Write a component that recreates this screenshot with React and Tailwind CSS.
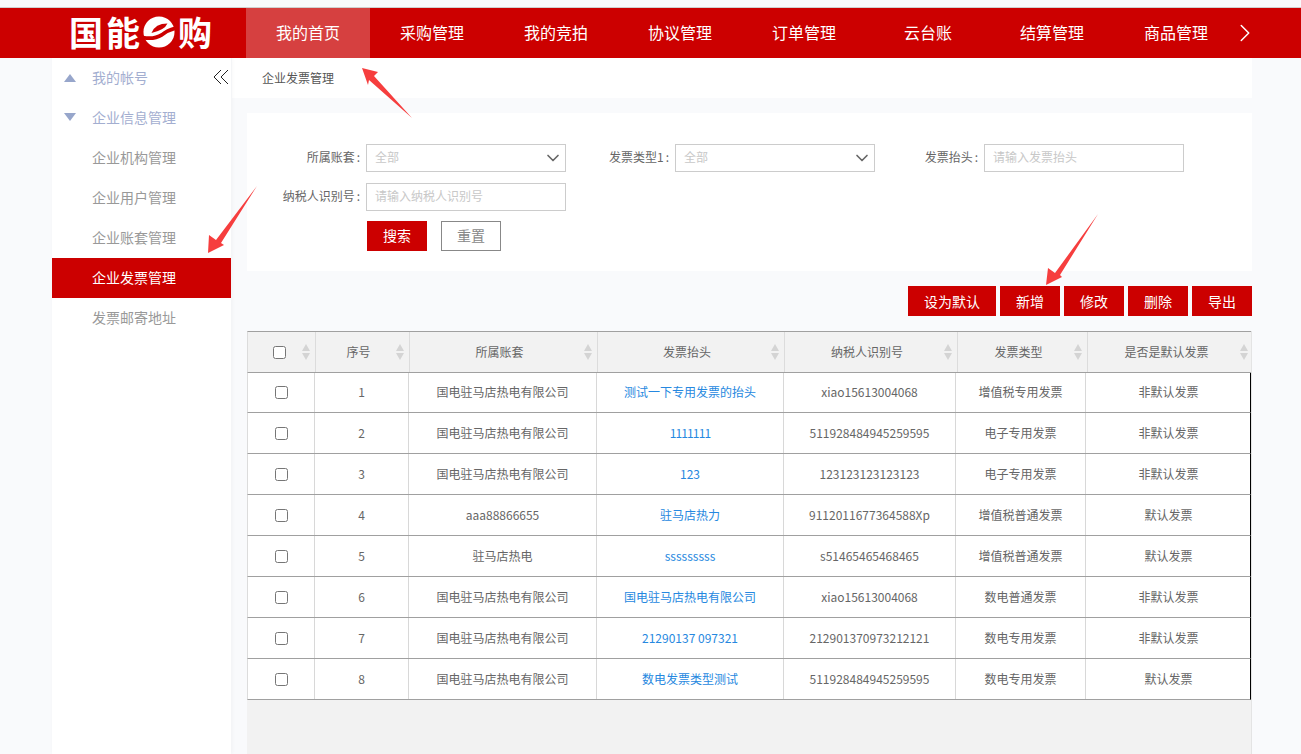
import React from "react";
import { ChevronDown, ChevronRight } from "lucide-react";

const nav = ["我的首页", "采购管理", "我的竞拍", "协议管理", "订单管理", "云台账", "结算管理", "商品管理"];
const headers = ["", "序号", "所属账套", "发票抬头", "纳税人识别号", "发票类型", "是否是默认发票"];
const rows = [
  ["1", "国电驻马店热电有限公司", "测试一下专用发票的抬头", "xiao15613004068", "增值税专用发票", "非默认发票"],
  ["2", "国电驻马店热电有限公司", "1111111", "511928484945259595", "电子专用发票", "非默认发票"],
  ["3", "国电驻马店热电有限公司", "123", "123123123123123", "电子专用发票", "非默认发票"],
  ["4", "aaa88866655", "驻马店热力", "9112011677364588Xp", "增值税普通发票", "默认发票"],
  ["5", "驻马店热电", "sssssssss", "s51465465468465", "增值税普通发票", "默认发票"],
  ["6", "国电驻马店热电有限公司", "国电驻马店热电有限公司", "xiao15613004068", "数电普通发票", "非默认发票"],
  ["7", "国电驻马店热电有限公司", "21290137 097321", "212901370973212121", "数电专用发票", "非默认发票"],
  ["8", "国电驻马店热电有限公司", "数电发票类型测试", "511928484945259595", "数电专用发票", "默认发票"],
];

function Field({ label, placeholder, select }) {
  return (
    <div className="w-[309px] pl-[10px] flex items-center gap-[6px]">
      <span className="flex-1 text-right text-[12px] text-[#666] whitespace-nowrap pb-[2px]">
        {label}
        <span className="ml-[2px]">:</span>
      </span>
      <div className="w-[200px] h-[28px] border border-[#ccc] bg-white flex items-center justify-between pl-2 pr-[2px]">
        <span className="text-[12px] text-[#c8c8c8] pb-[2px]">{placeholder}</span>
        {select && <ChevronDown size={20} strokeWidth={2} className="text-[#666]" />}
      </div>
    </div>
  );
}

function Sort() {
  return (
    <span className="absolute right-[5px] top-[12px] flex flex-col gap-[2px]">
      <span className="w-0 h-0 border-x-[4px] border-x-transparent border-b-[7px] border-b-[#d4d4d4]" />
      <span className="w-0 h-0 border-x-[4px] border-x-transparent border-t-[7px] border-t-[#d4d4d4]" />
    </span>
  );
}

function Logo() {
  return (
    <div className="w-[176px] pl-[69px] pb-[2px] flex items-center font-bold text-white text-[34px] leading-none whitespace-nowrap">
      <span className="tracking-[3px]">国能</span>
      <svg width="32" height="32" viewBox="0 0 34 34" className="shrink-0">
        <circle cx="17" cy="17" r="16.5" fill="#fff" />
        <path d="M9 18 Q13 8 26 8 Q23 15 9 18 Z" fill="#cc0000" />
        <path d="M0 23 Q12 25 20 20 Q26 15 34 13" fill="none" stroke="#cc0000" strokeWidth="4" />
      </svg>
      <span className="ml-[3px]">购</span>
    </div>
  );
}

const sideItems = [
  ["我的帐号", "up"],
  ["企业信息管理", "down"],
  ["企业机构管理"],
  ["企业用户管理"],
  ["企业账套管理"],
  ["企业发票管理", null, true],
  ["发票邮寄地址"],
];

export default function App() {
  const head = "grid grid-cols-[68px_94px_188px_187px_173px_130px_165px]";
  const body = "grid grid-cols-[67px_94px_188px_187px_172px_130px_165px]";
  return (
    <div className="relative h-[754px] overflow-hidden bg-[#f9fafc] font-['Noto_Sans_CJK_SC','Liberation_Sans',sans-serif]">
      <div className="h-2 border-b border-[#d0d0d0]" />
      <header className="h-[50px] bg-[#cc0000] flex items-stretch">
        <Logo />
        <div className="w-[70px]" />
        {nav.map((n, i) => (
          <div
            key={n}
            className={`w-[124px] flex items-center justify-center text-white text-[16px] pb-[2px] ${i === 0 ? "bg-[#d64040]" : ""}`}
          >
            {n}
          </div>
        ))}
        <div className="flex-1 flex items-center">
          <ChevronRight size={30} strokeWidth={1.2} className="text-white ml-[-8px] mb-[1px]" />
        </div>
      </header>

      <div className="flex pl-[52px]">
        <aside className="relative w-[179px] h-[696px] bg-white text-[14px] shadow-[1px_0_4px_rgba(0,0,0,0.04)]">
          {sideItems.map(([t, arrow, active]) => (
            <div
              key={t}
              className={`relative h-10 flex items-center pl-10 pb-[2px] ${
                active ? "bg-[#cc0000] text-white" : arrow ? "text-[#a3aed0]" : "text-[#999]"
              }`}
            >
              {arrow === "up" && (
                <span className="absolute left-3 top-[16px] w-0 h-0 border-x-[6px] border-x-transparent border-b-[8px] border-b-[#97a6cb]" />
              )}
              {arrow === "down" && (
                <span className="absolute left-3 top-[15px] w-0 h-0 border-x-[6px] border-x-transparent border-t-[8px] border-t-[#97a6cb]" />
              )}
              {t}
            </div>
          ))}
          <svg width="16" height="16" viewBox="0 0 16 16" className="absolute left-[161px] top-[11px]" fill="none" stroke="#222" strokeWidth="1">
            <path d="M8 1 L1 8 L8 15" />
            <path d="M15 1 L8 8 L15 15" />
          </svg>
        </aside>

        <main className="ml-[1px] w-[1020px]">
          <div className="h-10 bg-white flex items-center pl-[30px] pb-[1px] text-[12px] text-[#555]">企业发票管理</div>
          <div className="ml-[15px] mt-[15px]">
            <div className="h-[158px] bg-white pt-[31px]">
              <div className="flex pl-[10px]">
                <Field label="所属账套" placeholder="全部" select />
                <Field label="发票类型1" placeholder="全部" select />
                <Field label="发票抬头" placeholder="请输入发票抬头" />
              </div>
              <div className="flex pl-[10px] mt-[11px]">
                <Field label="纳税人识别号" placeholder="请输入纳税人识别号" />
              </div>
              <div className="flex gap-[14px] ml-[120px] mt-[10px] text-[14px]">
                <div className="w-[60px] h-[30px] bg-[#cc0000] text-white flex items-center justify-center pb-[1px]">搜索</div>
                <div className="w-[60px] h-[30px] border border-[#888] bg-white text-[#888] flex items-center justify-center pb-[1px]">重置</div>
              </div>
            </div>

            <div className="flex justify-end gap-1 mt-[15px] text-[14px] text-white">
              {["设为默认", "新增", "修改", "删除", "导出"].map((b, i) => (
                <div key={b} className={`${i === 0 ? "w-[88px]" : "w-[60px]"} h-[30px] bg-[#cc0000] flex items-center justify-center`}>
                  {b}
                </div>
              ))}
            </div>

            <div className="mt-[15px] h-[423px] bg-[#f2f2f2] border-r border-[#e4e4e4] text-[12px] text-[#666]">
              <div className={`${head} h-[42px] border-y border-[#a0a0a0] border-l border-l-[#dcdcdc]`}>
                {headers.map((h, i) => (
                  <div key={i} className="relative flex items-center justify-center pr-[8px] pb-[1px] border-r border-[#dcdcdc] last:border-r-0">
                    {i === 0 ? <input type="checkbox" className="w-[13px] h-[13px] mt-[1px] ml-[4px]" readOnly /> : h}
                    <Sort />
                  </div>
                ))}
              </div>
              {rows.map((r, idx) => (
                <div
                  key={r[0]}
                  className={`${body} ${idx === 0 ? "h-[40px]" : "h-[41px]"} bg-white border-b border-[#a0a0a0] border-l border-l-[#dcdcdc] border-r border-r-black w-[1004px]`}
                >
                  <div className="flex items-center justify-center border-r border-[#d8d8d8]">
                    <input type="checkbox" className="w-[13px] h-[13px]" readOnly />
                  </div>
                  {r.map((c, i) => (
                    <div
                      key={i}
                      className={`flex items-center justify-center ${idx === 0 ? "pb-[1px]" : ""} ${i < 5 ? "border-r border-[#d8d8d8]" : ""} ${i === 2 ? "text-[#2688e0]" : ""} ${c === "1111111" ? "tracking-[-0.9px]" : ""}`}
                    >
                      {c}
                    </div>
                  ))}
                </div>
              ))}
            </div>
          </div>
        </main>
      </div>

      <svg className="absolute inset-0 pointer-events-none" width="1301" height="754">
        <polygon points="362,68 378,72 374,76 412,118 369,80 368,85" fill="#f63e3e" />
        <polygon points="208,253 209,235 216,240 257,186 221,243 224,245" fill="#f63e3e" />
        <polygon points="1046,285 1048,268 1055,273 1098,214 1060,275 1062,277" fill="#f63e3e" />
      </svg>
    </div>
  );
}
